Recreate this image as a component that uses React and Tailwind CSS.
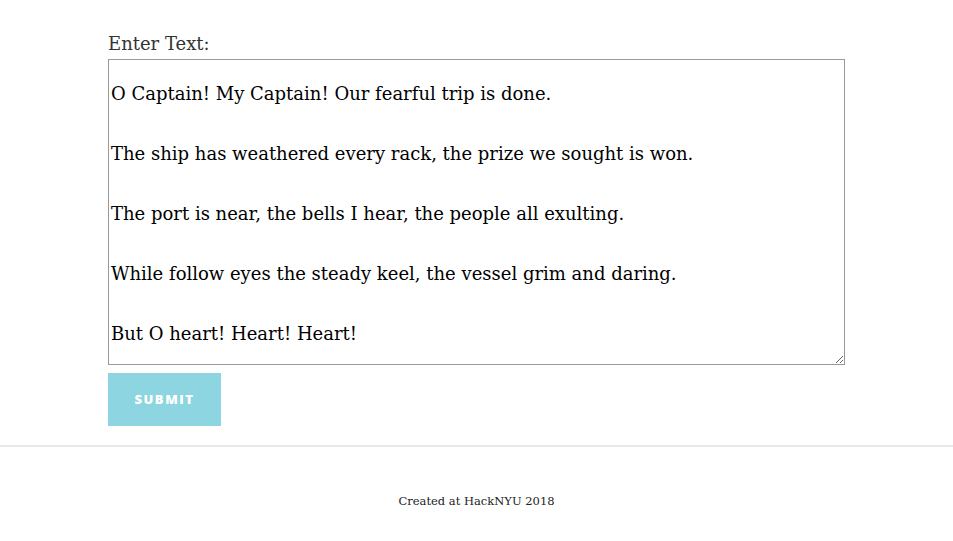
export default function App() {
  const text =
    "O Captain! My Captain! Our fearful trip is done.\n\nThe ship has weathered every rack, the prize we sought is won.\n\nThe port is near, the bells I hear, the people all exulting.\n\nWhile follow eyes the steady keel, the vessel grim and daring.\n\nBut O heart! Heart! Heart!";
  return (
    <div className="min-h-[541px] bg-white" style={{ fontFamily: '"DejaVu Serif", serif' }}>
      <div className="pl-[108px] pt-[32px] w-[845px]">
        <label className="block text-[18px] leading-[24px] text-[#333]">Enter Text:</label>
        <textarea
          readOnly
          value={text}
          className="mt-[3px] block w-[737px] h-[306px] border border-[#999] px-[2px] pt-[19px] text-[18px] leading-[30px] text-black resize-y overflow-hidden outline-none"
          style={{ fontFamily: '"DejaVu Serif", serif' }}
        />
        <button className="mt-[8px] w-[113px] h-[53px] bg-[#8dd5e0] text-white text-[13px] font-extrabold tracking-[0.12em]" style={{ fontFamily: '"Open Sans", sans-serif' }}>
          SUBMIT
        </button>
      </div>
      <div className="mt-[19px] h-[2px] bg-[#e8e8e8]" />
      <p className="mt-[46px] text-center text-[11.5px] text-[#222]">Created at HackNYU 2018</p>
    </div>
  );
}
